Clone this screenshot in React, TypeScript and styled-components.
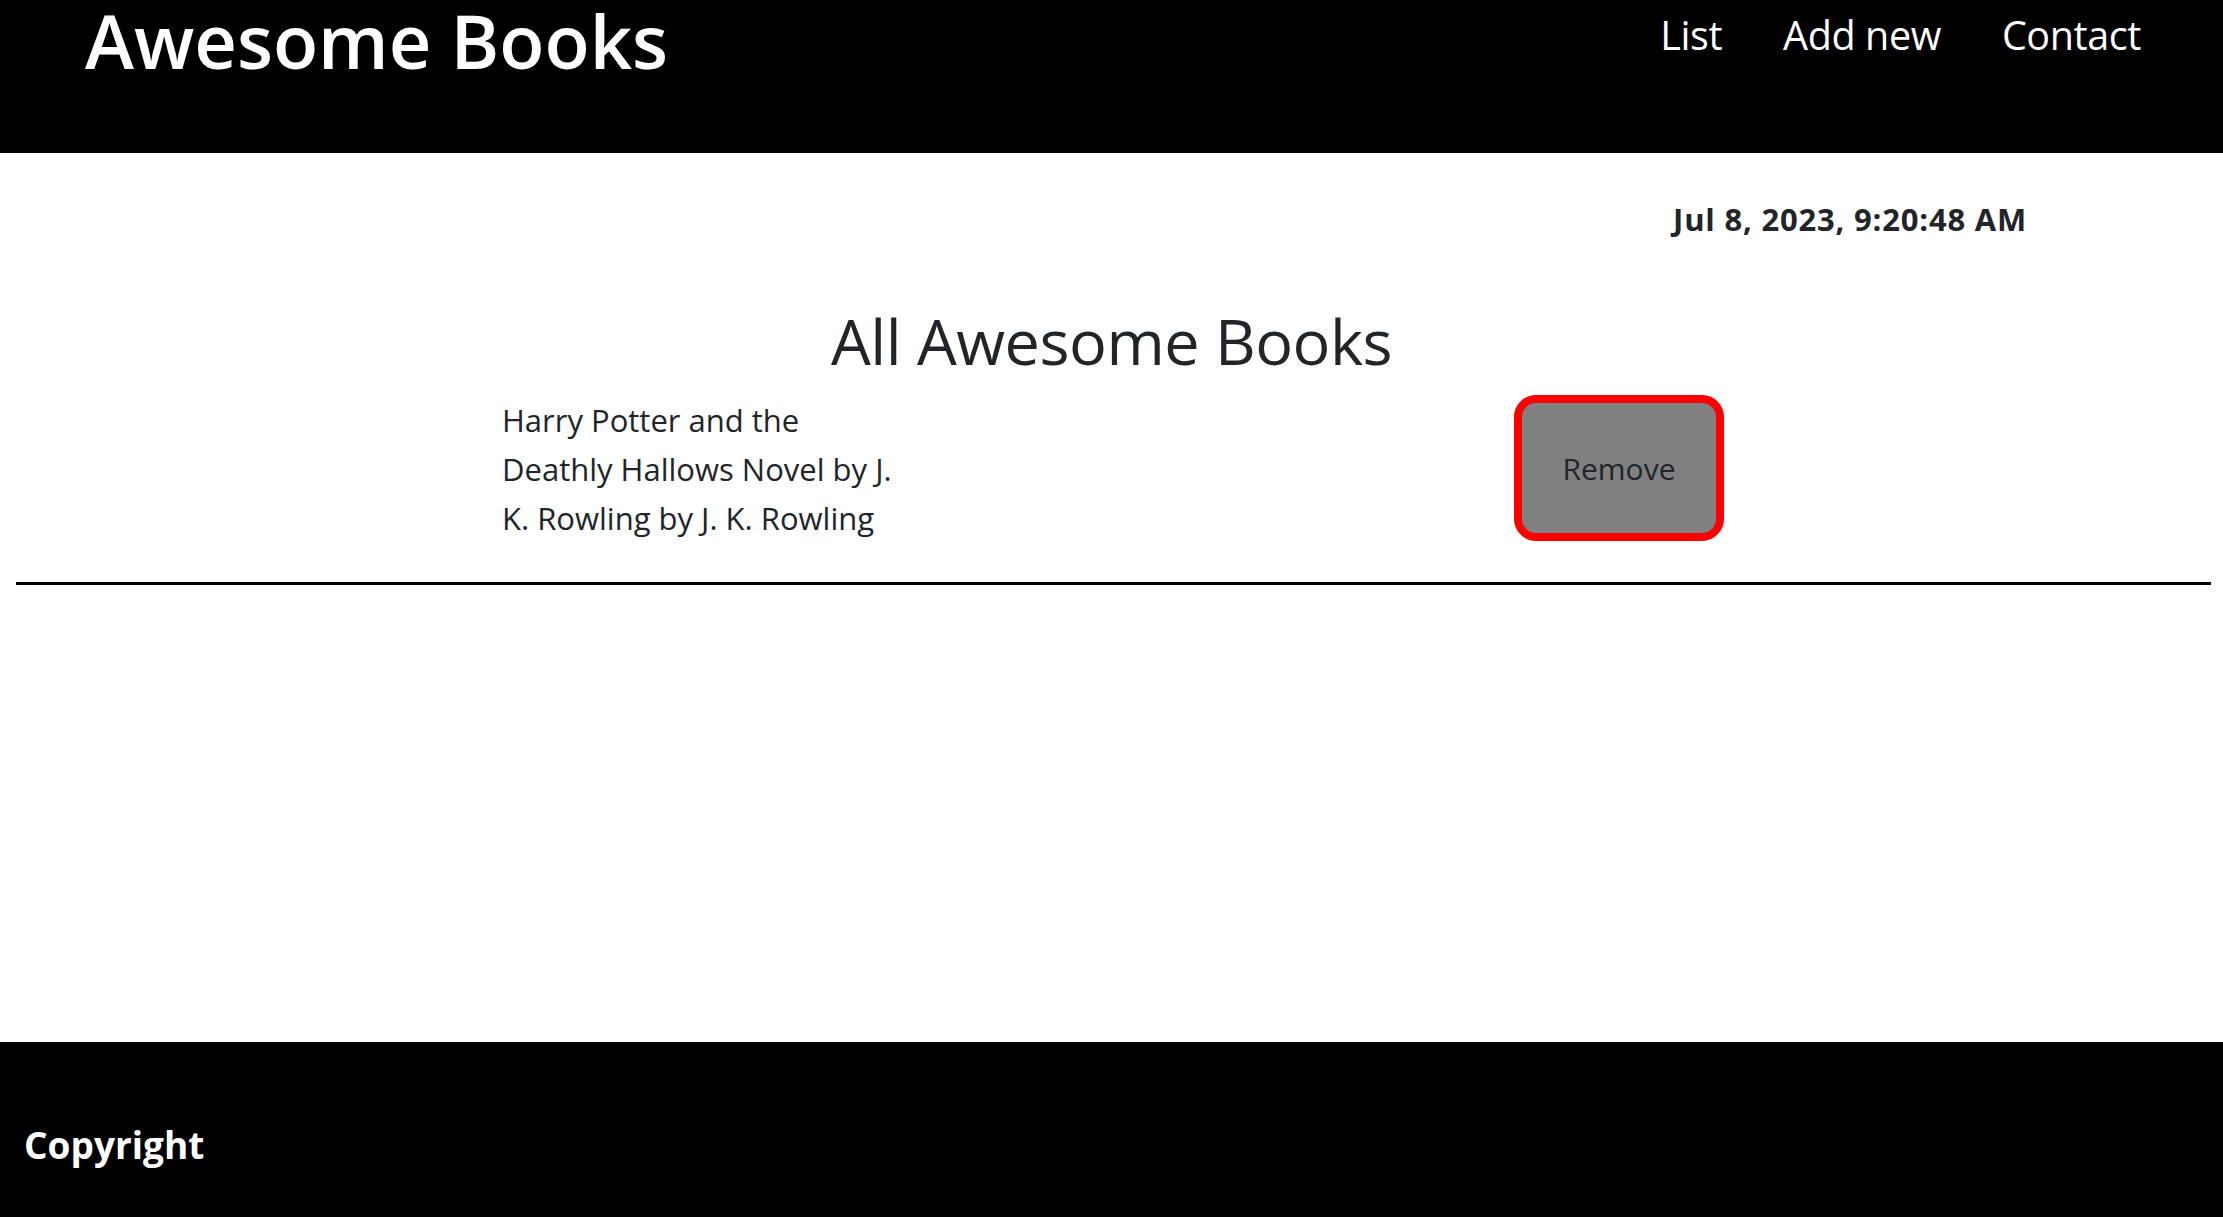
import React from "react";
import styled, { createGlobalStyle } from "styled-components";

const GlobalStyle = createGlobalStyle`
  html, body {
    margin: 0;
    padding: 0;
    background: #ffffff;
    color: #212529;
    font-family: "Open Sans", "Noto Sans", sans-serif;
  }
  * { box-sizing: border-box; }
`;

const Page = styled.div`
  min-height: 100vh;
  display: flex;
  flex-direction: column;
`;

const Header = styled.header`
  height: 153px;
  background: #000000;
  display: flex;
  justify-content: space-between;
  align-items: flex-start;
  padding: 0 82px 0 85px;
`;

const Brand = styled.h1`
  margin: 0;
  color: #ffffff;
  font-size: 74px;
  font-weight: 600;
  line-height: 1.1;
  letter-spacing: 0;
`;

const Nav = styled.nav`
  display: flex;
  gap: 61px;
  padding-top: 12px;
`;

const NavLink = styled.a`
  color: #ffffff;
  font-size: 39.5px;
  line-height: 1.2;
  text-decoration: none;
  letter-spacing: -0.4px;
`;

const Main = styled.main`
  flex: 1;
  display: flex;
  flex-direction: column;
`;

const DateRow = styled.div`
  display: flex;
  justify-content: flex-end;
  padding: 48px 196px 0 0;
`;

const DateText = styled.p`
  margin: 0;
  font-size: 31px;
  font-weight: 700;
  line-height: 1.2;
  letter-spacing: 0.8px;
`;

const Title = styled.h2`
  margin: 65px 0 0;
  text-align: center;
  font-size: 63px;
  font-weight: 500;
  line-height: 1.2;
  letter-spacing: -0.5px;
`;

const BookRow = styled.div`
  display: flex;
  justify-content: space-between;
  align-items: center;
  padding: 0 499px 0 502px;
  margin-top: 15px;
`;

const BookText = styled.p`
  margin: 2px 0 0;
  width: 406px;
  font-size: 31px;
  line-height: 49px;
`;

const RemoveButton = styled.button`
  width: 210px;
  height: 146px;
  background: #808080;
  border: 8px solid #ff0000;
  border-radius: 22px;
  font-family: inherit;
  font-size: 30px;
  color: #212529;
  cursor: pointer;
`;

const Divider = styled.hr`
  margin: 39px 12px 0 16px;
  border: none;
  border-top: 3px solid #000000;
  opacity: 1;
`;

const Footer = styled.footer`
  height: 175px;
  background: #000000;
  display: flex;
  align-items: flex-start;
  padding: 81px 24px 0;
`;

const Copyright = styled.p`
  margin: 0;
  color: #ffffff;
  font-size: 37px;
  font-weight: 700;
  line-height: 1.2;
`;

export default function App() {
  return (
    <>
      <GlobalStyle />
      <Page>
        <Header>
          <Brand>Awesome Books</Brand>
          <Nav>
            <NavLink href="#list">List</NavLink>
            <NavLink href="#add">Add new</NavLink>
            <NavLink href="#contact">Contact</NavLink>
          </Nav>
        </Header>
        <Main>
          <DateRow>
            <DateText>Jul 8, 2023, 9:20:48 AM</DateText>
          </DateRow>
          <Title>All Awesome Books</Title>
          <BookRow>
            <BookText>Harry Potter and the Deathly Hallows Novel by J. K. Rowling by J. K. Rowling</BookText>
            <RemoveButton type="button">Remove</RemoveButton>
          </BookRow>
          <Divider />
        </Main>
        <Footer>
          <Copyright>Copyright</Copyright>
        </Footer>
      </Page>
    </>
  );
}
